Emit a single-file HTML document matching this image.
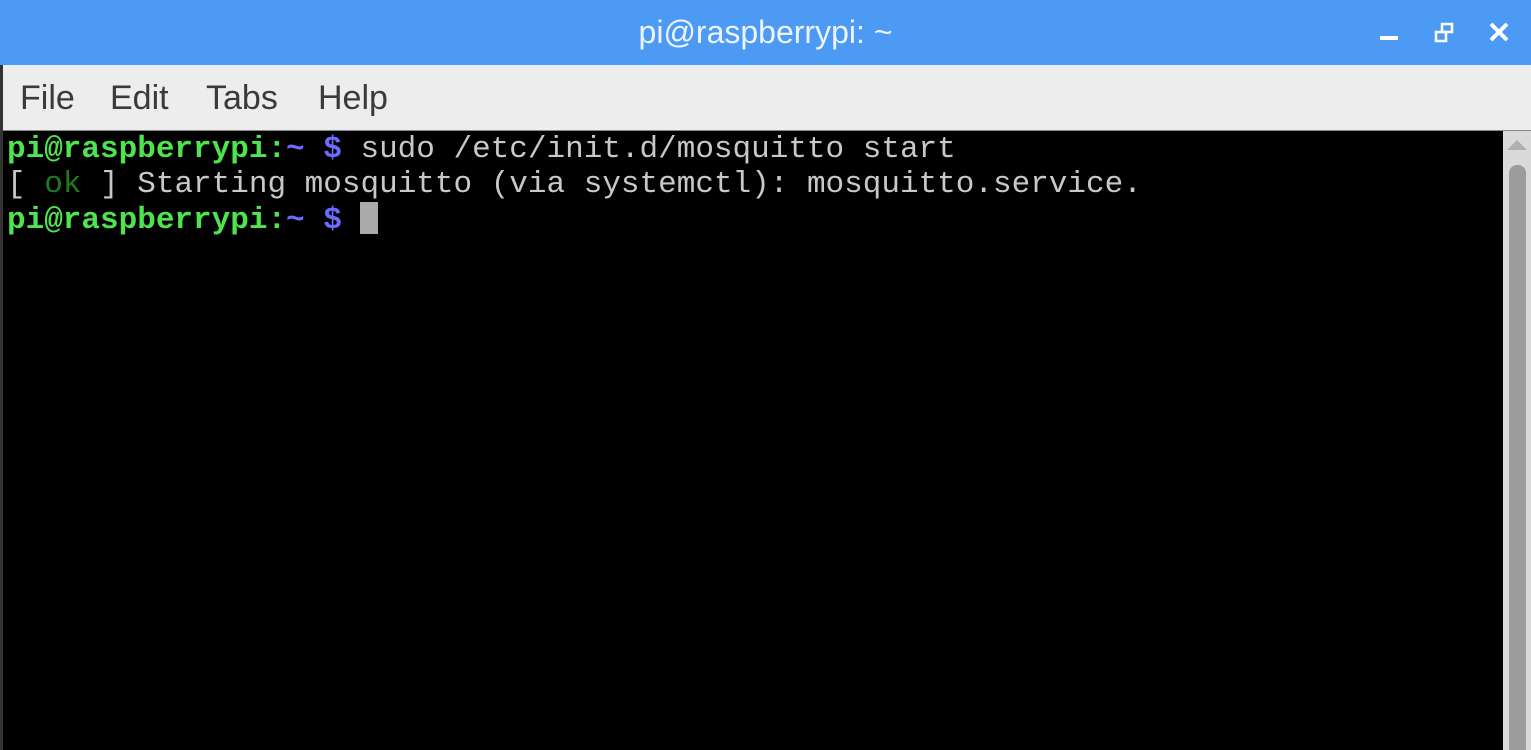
<!DOCTYPE html>
<html><head><meta charset="utf-8"><style>
html,body{margin:0;padding:0;width:1531px;height:750px;overflow:hidden;background:#000}
#title{position:absolute;left:0;top:0;width:1531px;height:65px;background:#4d9af5;}
#title .t{position:absolute;left:0;right:0;top:14px;text-align:center;color:#eef4ff;font:32px "Liberation Sans",sans-serif}
#menu{position:absolute;left:3px;top:65px;width:1528px;height:65px;background:#ededed;border-bottom:1px solid #888}
#menu span{position:absolute;top:14px;font:34px "Liberation Sans",sans-serif;color:#3a3a3a}
#left{position:absolute;left:0;top:65px;width:3px;height:685px;background:#333}
#term{position:absolute;left:3px;top:131px;width:1500px;height:619px;background:#000;font:31px/35px "Liberation Mono",monospace;color:#c8c8c8;white-space:pre}
.g{color:#4ee44e;font-weight:bold}.b{color:#6b6bff;font-weight:bold}.ok{color:#1e7a1e}
#sb{position:absolute;left:1503px;top:131px;width:28px;height:619px;background:#dadada}
#thumb{position:absolute;left:1509px;top:165px;width:17px;height:585px;background:#9c9c9c;border-radius:8px 8px 0 0}
#arrow{position:absolute;left:1507px;top:140px;width:0;height:0;border-left:10px solid transparent;border-right:10px solid transparent;border-bottom:10px solid #b0b0b0}
</style></head><body>
<div id="title"><div class="t">pi@raspberrypi: ~</div>
<div style="position:absolute;left:1380px;top:36px;width:18px;height:4px;background:#fff"></div>
<svg style="position:absolute;left:1434px;top:22px" width="22" height="22"><rect x="8" y="2" width="10" height="8" fill="none" stroke="#fff" stroke-width="2.5"/><rect x="2" y="10" width="10" height="9" fill="none" stroke="#fff" stroke-width="2.5"/></svg>
<svg style="position:absolute;left:1489px;top:22px" width="22" height="22"><path d="M2 2L18 18M18 2L2 18" stroke="#fff" stroke-width="4"/></svg>
</div>
<div id="left"></div>
<div id="menu"><span style="left:17px">File</span><span style="left:107px">Edit</span><span style="left:203px">Tabs</span><span style="left:315px">Help</span></div>
<div id="term"><div style="padding-left:4px;margin-top:1px"><span class="g">pi@raspberrypi:</span><span class="b">~ $</span> sudo /etc/init.d/mosquitto start
[ <span class="ok">ok</span> ] Starting mosquitto (via systemctl): mosquitto.service.
<span class="g">pi@raspberrypi:</span><span class="b">~ $</span> <span style="display:inline-block;width:18px;height:32px;background:#aaa;vertical-align:-6px"></span></div></div>
<div id="sb"></div><div id="arrow"></div><div id="thumb"></div>
</body></html>
